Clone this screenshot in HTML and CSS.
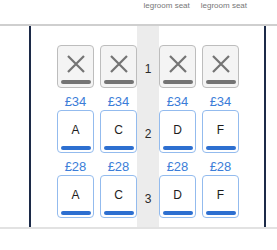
FILE: index.html
```html
<!DOCTYPE html>
<html lang="en">
<head>
  <meta charset="UTF-8">
  <title>Seat Map</title>
  <link rel="stylesheet" href="styles.css">
</head>
<body>

  <div id="legend">
    <span>legroom seat</span>
    <span>legroom seat</span>
  </div>

  <div id="plane">
    <div id="cabin">

      <div class="side">
        <div class="row first">
          <div class="cell"><div class="seat blocked"><svg viewBox="0 0 18 18"><path d="M1 1L17 17M17 1L1 17"/></svg><i class="bar"></i></div></div>
          <div class="cell"><div class="seat blocked"><svg viewBox="0 0 18 18"><path d="M1 1L17 17M17 1L1 17"/></svg><i class="bar"></i></div></div>
        </div>
        <div class="row">
          <div class="cell"><p class="price">£34</p><div class="seat"><span>A</span><i class="bar"></i></div></div>
          <div class="cell"><p class="price">£34</p><div class="seat"><span>C</span><i class="bar"></i></div></div>
        </div>
        <div class="row">
          <div class="cell"><p class="price">£28</p><div class="seat"><span>A</span><i class="bar"></i></div></div>
          <div class="cell"><p class="price">£28</p><div class="seat"><span>C</span><i class="bar"></i></div></div>
        </div>
      </div>

      <div id="aisle">
        <div class="num">1</div>
        <div class="num">2</div>
        <div class="num">3</div>
      </div>

      <div class="side right">
        <div class="row first">
          <div class="cell"><div class="seat blocked"><svg viewBox="0 0 18 18"><path d="M1 1L17 17M17 1L1 17"/></svg><i class="bar"></i></div></div>
          <div class="cell"><div class="seat blocked"><svg viewBox="0 0 18 18"><path d="M1 1L17 17M17 1L1 17"/></svg><i class="bar"></i></div></div>
        </div>
        <div class="row">
          <div class="cell"><p class="price">£34</p><div class="seat"><span>D</span><i class="bar"></i></div></div>
          <div class="cell"><p class="price">£34</p><div class="seat"><span>F</span><i class="bar"></i></div></div>
        </div>
        <div class="row">
          <div class="cell"><p class="price">£28</p><div class="seat"><span>D</span><i class="bar"></i></div></div>
          <div class="cell"><p class="price">£28</p><div class="seat"><span>F</span><i class="bar"></i></div></div>
        </div>
      </div>

    </div>
  </div>

</body>
</html>
```

FILE: styles.css
```css
body {
  margin: 0;
  padding: 0;
  background-color: white;
  font-family: "Liberation Sans", Arial, sans-serif;
}

#legend {
  height: 24px;
  display: flex;
  justify-content: flex-end;
  gap: 11px;
  padding-right: 30px;
  box-sizing: border-box;
  padding-top: 1px;
  font-size: 8px;
  color: #777;
}

#plane {
  border-top: 2px solid #cfcfcf;
  border-bottom: 2px solid #e2e2e2;
}

#cabin {
  display: flex;
  margin: 0 11px 0 29px;
  border-left: 2px solid #1c2a48;
  border-right: 2px solid #1c2a48;
}

.side {
  width: 106px;
  padding-left: 26px;
  box-sizing: border-box;
  padding-bottom: 9px;
}

.side.right {
  width: 105px;
  padding-left: 0;
}

.row {
  display: flex;
  gap: 6px;
}

.row.first .cell {
  padding-top: 19px;
}

.cell {
  width: 37px;
}

.price {
  margin: 0;
  height: 22px;
  line-height: 14px;
  padding-top: 7px;
  box-sizing: border-box;
  text-align: center;
  font-size: 13px;
  color: #3b7dd8;
}

.seat {
  height: 43px;
  box-sizing: border-box;
  border: 1.5px solid #93bbee;
  border-radius: 4px;
  background-color: white;
  display: flex;
  flex-direction: column;
  align-items: center;
}

.seat span {
  flex: 1;
  padding-top: 2px;
  display: flex;
  align-items: center;
  font-size: 12px;
  color: #1d1d1d;
}

.seat .bar {
  display: block;
  width: 30px;
  height: 4px;
  margin-bottom: 2px;
  border-radius: 2px;
  background-color: #2d6fd0;
}

.seat.blocked {
  border: 1px solid #bdbdbd;
  background-color: #f4f4f4;
}

.seat.blocked svg {
  width: 18px;
  height: 18px;
  margin-top: 9px;
  margin-bottom: auto;
  stroke: #747474;
  stroke-width: 2.2;
  fill: none;
}

.seat.blocked .bar {
  background-color: #747474;
  margin-bottom: 3px;
}

#aisle {
  width: 22px;
  padding-top: 36px;
  box-sizing: border-box;
  background-color: #ececec;
  text-align: center;
  font-size: 12px;
  color: #2a2a2a;
}

.num {
  height: 65px;
  line-height: 14px;
}

.num:last-child {
  height: auto;
}
```
